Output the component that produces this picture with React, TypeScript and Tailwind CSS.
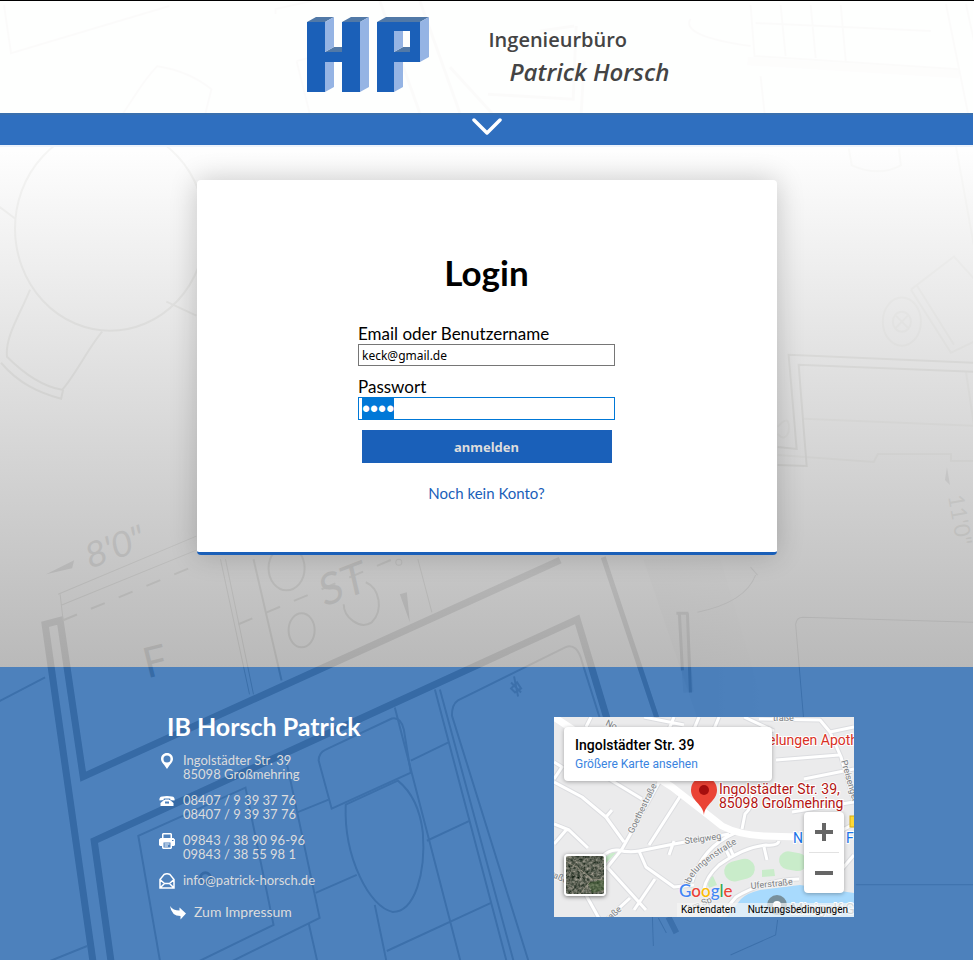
import { useEffect, useRef } from "react";
import type { ReactNode } from "react";

const HEAD = "font-['Lato',sans-serif]";
const ROBOTO = "font-['Roboto',sans-serif]";

function Blueprint() {
  return (
    <svg
      aria-hidden="true"
      className="absolute inset-0 h-full w-full"
      viewBox="0 0 973 960"
      preserveAspectRatio="xMidYMin slice"
      fill="none"
    >
      <defs>
        <linearGradient id="fold" x1="0" y1="0" x2="1" y2="0">
          <stop offset="0.2" stopColor="#777" stopOpacity="0.12" />
          <stop offset="1" stopColor="#777" stopOpacity="0" />
        </linearGradient>
      </defs>
      <rect width="973" height="960" fill="#fafafa" />
      <path d="M643 557L700 725L780 760L720 557Z" fill="url(#fold)" />

      {/* far, faint part of the plan */}
      <g stroke="#d8d8d0" strokeWidth="2">
        <path d="M5 4L12 52L170 5M124 112C140 88 145 78 158 65Q190 70 212 88L206 112" />
        <path d="M276 13V8L312 0M297 60L310 112M297 60L308 57" />
        <path d="M380 0L420 112M420 0L460 112M450 66L492 112M488 93L573 98L576 25M540 30L574 25M581 112L584 60" strokeWidth="3" />
        <path d="M750 4L754 55L958 68M780 4L785 55M810 4L815 57M840 4L845 60M755 22L930 30" />
        <path d="M747 60L958 73" strokeWidth="8" opacity="0.6" />
        <path d="M945 3L967 112M965 3L973 40M690 18Q680 35 750 45M760 75L764 112M955 145L973 245" />
        <path d="M848 147L851 164Q878 176 900 164L898 147" />
        <ellipse cx="901" cy="320" rx="19" ry="24" />
        <ellipse cx="901" cy="320" rx="9" ry="10" />
        <path d="M895 314L907 326M907 314L895 326M910 288L953 255L973 277M910 288L950 351L973 340M916 284L953 343M803 417L973 424M777 453L873 460L877 452H950V459H973M965 370L973 424" />
        <path d="M777 425Q790 410 788 430Q784 440 777 432" />
      </g>

      {/* round table and chairs */}
      <g stroke="#a8a89e" strokeWidth="2">
        <ellipse cx="111" cy="227" rx="95" ry="102" />
        <path d="M31 288C20 315 6 335 8 355C25 372 45 385 63 388C75 375 90 345 103 330M2 361C20 382 40 391 62 397L64 388M0 205L16 217M167 300L197 314" />
        <path d="M973 361L788 353L796 447L777 445M973 370L798 363L806 464L777 463" />
      </g>
      <path d="M946 465L944 478L949 483Z" fill="#999" />
      <text x="0" y="0" transform="translate(947 494) rotate(80)" fill="#a8a89e" fontSize="22" fontFamily="Lato">11'0"</text>

      {/* near walls */}
      <g stroke="#858585" strokeWidth="7">
        <path d="M94 960L46 622L61 618L84 774L560 558" />
        <path d="M112 960L95 838L577 617L607 717L642 850" />
        <path d="M603 555L657 717" strokeWidth="5" />
        <path d="M682 612L688 690" strokeWidth="10" opacity="0.2" />
        <path d="M676 611H688M679 611L682 668M687 611L690 690" strokeWidth="3" />
      </g>
      <g stroke="#a4a4a4" strokeWidth="2">
        <path d="M161 960L139 833L246 785L274 922L196 960M286 755L320 915L229 960M46 960L88 943M0 699L46 675" />
        <path d="M319 758Q319 750 326 747L392 716Q401 714 404 727L411 770L332 806Z" />
        <path d="M346 802L398 778Q419 795 423 830C426 870 415 909 393 909C370 905 344 855 346 802Z" />
        <path d="M395 705L461 960M435 687L507 960M440 687L514 960M448 740L411 758M427 838L470 818M387 948L491 900M316 890L357 872M375 902L387 960M309 920L318 960M297 810L329 797" />
        <path d="M529 960L452 713Q452 702 458 698L565 645Q577 640 582 660L600 717" />
        <path d="M511 686L517 680L521 686L515 690ZM511 680L521 690M514 674L518 694" />
        <path d="M755 573Q745 600 697 610M750 565L757 573M803 717L795 622Q796 615 802 615L973 620M855 882L973 882M652 912L653 943M658 915L666 930M777 917L775 932L730 952" strokeWidth="1" />
        <path d="M668 914L676 930" strokeWidth="6" />
      </g>
      <g stroke="#a0a09a" strokeWidth="1">
        <path d="M59 592L197 534M62 603L197 548M61 592L64 618M221 557L250 692M226 557L254 692M418 557L432 610" />
        <path d="M254 557L282 678" strokeWidth="2" />
        <path d="M64 618L197 563M239 622L393 557" strokeWidth="2" strokeDasharray="15 15" />
        <ellipse cx="287" cy="566" rx="18" ry="22" strokeWidth="2" />
        <ellipse cx="302" cy="628" rx="13" ry="17" strokeWidth="2" />
        <path d="M366 580C380 586 384 608 372 620C360 628 344 615 344 602" strokeWidth="2" />
        <circle cx="399" cy="560" r="3" />
      </g>
      <path d="M400 592L407 590L410 620ZM47 572L75 558L73 566Z" fill="#8a8a8a" />
      <circle cx="206" cy="875" r="5" stroke="#888" strokeWidth="3" />
      <g fill="#8a8a88" fontFamily="Lato">
        <text transform="translate(90 567) rotate(-20) skewX(-8)" fontSize="35">8'0"</text>
        <text transform="translate(324 605) rotate(-21) skewX(-8)" fontSize="43">ST</text>
        <text transform="translate(148 676) rotate(-14)" fontSize="42">F</text>
      </g>
    </svg>
  );
}

function Logo() {
  return (
    <svg role="img" aria-label="HP" className="h-[76px] w-[124px] shrink-0" viewBox="307 17 124 76">
      <g fill="#5179a7">
        <path d="M307 22L316 17H334L325 22ZM342 22L351 17H369L360 22ZM377 22L386 17H429L420 22ZM325 52L334 47H342V52ZM394 52L403 47H410V52Z" />
      </g>
      <g fill="#95b4e4">
        <path d="M325 22L334 17V47L325 52ZM325 62H334V87L325 92ZM360 22L369 17V87L360 92ZM420 22L429 17V57L420 62ZM394 31H403V47L394 52ZM394 62H403V87L394 92Z" />
      </g>
      <path
        fill="#1b60b8"
        fillRule="evenodd"
        d="M307 22H325V52H342V22H360V92H342V62H325V92H307ZM377 22H420V62H394V92H377ZM394 31V52H410V31Z"
      />
    </svg>
  );
}

function Row({ icon, children }: { icon: ReactNode; children: ReactNode }) {
  return (
    <li className="flex items-start gap-2">
      <svg aria-hidden="true" className="h-4 w-4 shrink-0" viewBox="0 0 16 16" fill="#fff">
        {icon}
      </svg>
      <div>{children}</div>
    </li>
  );
}

const ROADS =
  "M0 65L28 80L52 100L70 125M52 100L58 93M55 62L88 82M108 60L68 132L52 152M127 78L95 128M48 140Q55 132 64 133Q75 136 85 134L120 127L175 117M0 107L15 113L34 131M13 112L0 127M85 134L92 150L120 170L140 168M101 162L80 193M53 150L92 193M76 181L50 205M120 124L115 138M0 45L8 50L0 62M32 178L47 205M181 116C160 125 145 140 138 165M225 124Q224 129 212 128Q190 130 165 148Q152 160 150 172M210 130L213 143M176 131L180 140M172 133L176 141M165 200L182 180Q210 163 245 162M205 2L266 3L276 15L287 40L300 85M276 15L300 10M222 43L285 38M250 62L300 52M198 77Q200 88 191 97L188 112M238 95L300 85M275 120L300 107M288 152L300 138M32 10L37 0M115 12L120 0M140 12L145 0M160 12L165 0M90 0L130 8M190 0L220 14";

function GoogleMap() {
  return (
    <section aria-label="Karte" className={`relative h-[200px] w-[300px] overflow-hidden bg-[#ebebeb] ${ROBOTO}`}>
      <svg aria-hidden="true" className="absolute inset-0 h-full w-full" viewBox="0 0 300 200" fill="none">
        <rect width="300" height="200" fill="#ebebec" />
        <g fill="#c9ecca">
          <rect x="170" y="143" width="31" height="20" rx="10" transform="rotate(-14 186 153)" />
          <rect x="225" y="135" width="28" height="18" rx="9" transform="rotate(10 238 144)" />
          <path d="M208 153L220 152L221 159L208 160ZM152 162L159 159L163 168L155 171ZM50 141L58 135H63L51 147Z" />
        </g>
        <path d="M173 200L187 182Q193 176 206 173L246 168L300 176V200Z" fill="#a8dafd" />
        <path d={ROADS} stroke="#dcdde0" strokeWidth="5" />
        <path d={ROADS} stroke="#fff" strokeWidth="3" strokeLinejoin="round" />
        <path d="M0 0L18 12L90 52L118 70L149 94L168 109Q185 118 210 119L245 120" stroke="#fff" strokeWidth="7" strokeLinejoin="round" />
        <path id="nibelungen" d="M136 168C140 155 150 146 190 122" />
        <g fill="#7d8184" fontSize="9" stroke="#f4f4f4" strokeWidth="2" paintOrder="stroke" fontFamily="Roboto">
          <text transform="translate(79 117) rotate(-64)">Goethestraße</text>
          <text transform="translate(131 127) rotate(-8)">Steigweg</text>
          <text>
            <textPath href="#nibelungen">ibelungenstraße</textPath>
          </text>
          <text transform="translate(197 172) rotate(-6)">Uferstraße</text>
          <text transform="translate(287 44) rotate(74)">Preisenger</text>
          <text x="219" y="4">traße</text>
          <text transform="translate(51 8) rotate(25)">No</text>
          <text transform="translate(-4 159) rotate(25)">raße</text>
          <text transform="translate(57 203) rotate(-42)">aße</text>
          <text transform="translate(134 195) rotate(-22)">Am Sp</text>
        </g>
        <g fontFamily="Roboto" stroke="#fff" strokeWidth="2" paintOrder="stroke">
          <text x="214" y="28" fontSize="14" fill="#d93025">elungen Apotheke</text>
          <text x="165" y="77" fontSize="14" fill="#b31412">Ingolstädter Str. 39,</text>
          <text x="165" y="91" fontSize="14" fill="#b31412">85098 Großmehring</text>
          <text x="239" y="126" fontSize="14" fill="#1a73e8">N</text>
          <text x="292" y="126" fontSize="14" fill="#1a73e8">F</text>
          <text x="237" y="197" fontSize="14" fill="#78909c">Minigolf G</text>
        </g>
        <rect x="296" y="99" width="8" height="11" fill="#fdd835" stroke="#d6ab11" />
        <circle cx="223" cy="188" r="10" fill="#78909c" />
        <circle cx="223" cy="188" r="4" fill="#fff" />
        <path d="M150 98C149 87 137 84 137 73A13 13 0 0 1 163 73C163 84 151 87 150 98Z" fill="#ea4335" />
        <circle cx="150" cy="73" r="5" fill="#a50e0e" />
      </svg>

      <div className="absolute left-2.5 top-2.5 h-[54px] w-[208px] rounded-sm bg-white px-[11px] pt-2.5 shadow-[0_1px_4px_rgba(0,0,0,0.3)]">
        <div className="text-sm leading-4 font-medium text-black">Ingolstädter Str. 39</div>
        <a href="#karte" className="mt-[3px] block text-xs leading-4 text-[#3a84df]">
          Größere Karte ansehen
        </a>
      </div>

      <button
        type="button"
        aria-label="Satellitenbild anzeigen"
        className="absolute bottom-[21px] left-2.5 h-[42px] w-[42px] overflow-hidden rounded-sm border-2 border-white shadow-[0_1px_4px_rgba(0,0,0,0.5)]"
      >
        <svg viewBox="0 0 38 38" className="block h-full w-full" fill="none">
          <filter id="terrain" x="0" y="0" width="1" height="1" colorInterpolationFilters="sRGB">
            <feTurbulence type="fractalNoise" baseFrequency="0.35" numOctaves="3" seed="8" />
            <feColorMatrix values="0.800 0.200 0 0 -0.130  0.700 0.200 0 0 -0.060  0.700 0.200 0 0 -0.110  0 0 0 0 1" />
          </filter>
          <rect width="38" height="38" filter="url(#terrain)" />
          <path d="M22 27L38 23V34L26 37Z" fill="#4c6a3c" opacity="0.5" />
          <path d="M0 5L12 12L26 23L38 24M26 23L14 38" stroke="#a59d8d" opacity="0.7" />
        </svg>
      </button>

      <div className="absolute bottom-6 right-2.5 flex w-10 flex-col items-center rounded-sm bg-white shadow-[0_1px_4px_rgba(0,0,0,0.3)]">
        <button type="button" aria-label="Vergrößern" className="flex h-10 w-10 items-center justify-center">
          <svg viewBox="0 0 18 18" className="h-[18px] w-[18px]" fill="#666">
            <path d="M7 0H11V7H18V11H11V18H7V11H0V7H7Z" />
          </svg>
        </button>
        <div className="h-px w-[30px] bg-[#e2e2e2]" />
        <button type="button" aria-label="Verkleinern" className="flex h-10 w-10 items-center justify-center">
          <svg viewBox="0 0 18 18" className="h-[18px] w-[18px]" fill="#666">
            <path d="M0 7H18V11H0Z" />
          </svg>
        </button>
      </div>

      <div className="absolute bottom-4 left-[125px] font-['Lato',sans-serif] text-[17px] leading-5 font-medium [text-shadow:0_0_2px_#fff]">
        <span className="text-[#4285f4]">G</span>
        <span className="text-[#ea4335]">o</span>
        <span className="text-[#fbbc04]">o</span>
        <span className="text-[#4285f4]">g</span>
        <span className="text-[#34a853]">l</span>
        <span className="text-[#ea4335]">e</span>
      </div>
      <div className="absolute right-0 bottom-0 flex h-3.5 gap-3 bg-[#f5f5f5]/70 pr-1.5 pl-1 text-[10px] leading-3.5 text-black">
        <button type="button">Kartendaten</button>
        <a href="#nutzung">Nutzungsbedingungen</a>
      </div>
    </section>
  );
}

export default function App() {
  const password = useRef<HTMLInputElement>(null);

  useEffect(() => {
    password.current?.focus();
    password.current?.select();
  }, []);

  return (
    <div className={`min-h-screen border-t border-black bg-white ${HEAD}`}>
      <div className="relative mr-px">
        <Blueprint />

        <div className="relative">
          <header className="flex h-28 items-start justify-center gap-[58px] bg-white/90 pt-4 pl-0.5">
            <Logo />
            <div className="w-[180px] pt-[9px] font-['Open_Sans',sans-serif] whitespace-nowrap text-[#444]">
              <div className="text-[20px] leading-7 font-semibold">Ingenieurbüro</div>
              <div className="mt-0.5 pl-[21px] text-[24px] leading-8 font-semibold italic">Patrick Horsch</div>
            </div>
          </header>

          <nav className="border-b-2 border-[#edf3fb] bg-[#2f6fbf]">
            <button
              type="button"
              aria-label="Menü öffnen"
              className="flex h-8 w-full items-start justify-center border-t-2 border-[#3a70ae] pt-[3px]"
            >
              <svg viewBox="0 0 30 18" className="h-[18px] w-[30px]" fill="none" stroke="#fff" strokeWidth="3.500" strokeLinecap="round" strokeLinejoin="round">
                <path d="M2 2L15 15L28 2" />
              </svg>
            </button>
          </nav>

          <main className="bg-linear-to-b from-white/90 to-[#aeaeae]/85 px-4 pt-[33px] pb-28">
            <div className="mx-auto flex max-w-[580px] flex-col items-center rounded border-b-3 border-[#1a5fb8] bg-white pt-[72px] pb-12 text-black shadow-[0_0_28px_rgba(0,0,0,0.2)]">
              <h1 className="text-[35px] leading-10 font-bold">Login</h1>
              <form className="mt-8 flex w-[257px] flex-col" onSubmit={(event) => event.preventDefault()}>
                <label htmlFor="user" className="text-[17px] leading-5 whitespace-nowrap">
                  Email oder Benutzername
                </label>
                <input
                  id="user"
                  type="text"
                  defaultValue="keck@gmail.de"
                  className="h-[22px] border border-[#767676] bg-white px-[3px] font-['Noto_Sans',sans-serif] text-xs outline-none"
                />
                <label htmlFor="password" className="mt-[11px] text-[17px] leading-5">
                  Passwort
                </label>
                <input
                  id="password"
                  ref={password}
                  type="password"
                  defaultValue="keck"
                  className="h-[23px] border border-[#0078d7] bg-white px-[3px] pt-[3px] pb-0.5 font-['Liberation_Sans',sans-serif] text-[23px] leading-4 outline-none selection:bg-[#0078d7] selection:text-white"
                />
                <button
                  type="submit"
                  className="mt-2.5 h-[33px] w-[250px] self-center bg-[#1a60b9] pt-0.5 font-['Noto_Sans',sans-serif] text-[13px] font-bold text-[#ddd]"
                >
                  anmelden
                </button>
              </form>
              <a href="#registrieren" className="mt-5 text-[15px] leading-[21px] text-[#1a60b9]">
                Noch kein Konto?
              </a>
            </div>
          </main>

          <footer className="bg-[#2263ac]/80 pt-[50px] pb-[43px]">
            <div className="mx-auto grid max-w-[870px] grid-cols-2 justify-items-center">
              <div className="w-[220px]">
                <h2 className="-mt-[5px] ml-2 text-[25px] leading-7 font-bold whitespace-nowrap text-white">IB Horsch Patrick</h2>
                <ul className="mt-[13px] flex flex-col gap-3 text-[13px] leading-3.5 text-[#dcdcdc]">
                  <Row icon={<path fillRule="evenodd" d="M8 0C4.500 0 2 2.500 2 6C2 9.500 5.500 11.500 8 16C10.500 11.500 14 9.500 14 6C14 2.500 11.500 0 8 0ZM8 2.500A3.500 3.500 0 1 1 8 9.500A3.500 3.500 0 1 1 8 2.500Z" />}>
                    Ingolstädter Str. 39
                    <br />
                    85098 Großmehring
                  </Row>
                  <Row
                    icon={
                      <path
                        fillRule="evenodd"
                        d="M1 4.500Q2 3 8 3T15 4.500Q16 6 15.500 7.500L11.500 7Q11.500 5.800 11 5.500H5Q4.500 5.800 4.500 7L0.500 7.500Q0 6 1 4.500ZM5 7H6V6.500H10V7H11L14.500 10V13H1.500V10ZM6 8.500V10.500H10V8.500Z"
                      />
                    }
                  >
                    08407 / 9 39 37 76
                    <br />
                    08407 / 9 39 37 76
                  </Row>
                  <Row
                    icon={
                      <path
                        fillRule="evenodd"
                        d="M4 0H12L13 1V5H3V1ZM4.500 1.500V5H11.500V1.500ZM1.500 5H14.500L16 6.500V12L15 13H13V15L12 16H4L3 15V13H1L0 12V6.500ZM4.500 9.500V14.500H11.500V9.500ZM5.500 10.500H10.500V11.500H5.500ZM5.500 12.500H9V13.500H5.500ZM13 7V8H14.500V7Z"
                      />
                    }
                  >
                    09843 / 38 90 96-96
                    <br />
                    09843 / 38 55 98 1
                  </Row>
                  <Row
                    icon={
                      <g fill="none" stroke="#fff" strokeWidth="1.500">
                        <path d="M1 6.500L5 1.500Q8 0 11 1.500L15 6.500V15H1ZM1 6.500L5.500 10.500H10.500L15 6.500M1 15L5.500 10.500M15 15L10.500 10.500" />
                      </g>
                    }
                  >
                    <a href="mailto:info@patrick-horsch.de">info@patrick-horsch.de</a>
                  </Row>
                </ul>
                <a href="#impressum" className="mt-[15px] ml-[11px] flex items-center gap-2 text-[14px] leading-4 text-[#dcdcdc]">
                  <svg aria-hidden="true" className="h-4 w-4" viewBox="0 0 16 16" fill="#fff">
                    <path d="M0 2Q3 6.500 9.500 6.500V3.500L16 9.500L10.500 15.500V12Q1.500 12 0 2Z" />
                  </svg>
                  Zum Impressum
                </a>
              </div>
              <GoogleMap />
            </div>
          </footer>
        </div>
      </div>
    </div>
  );
}
